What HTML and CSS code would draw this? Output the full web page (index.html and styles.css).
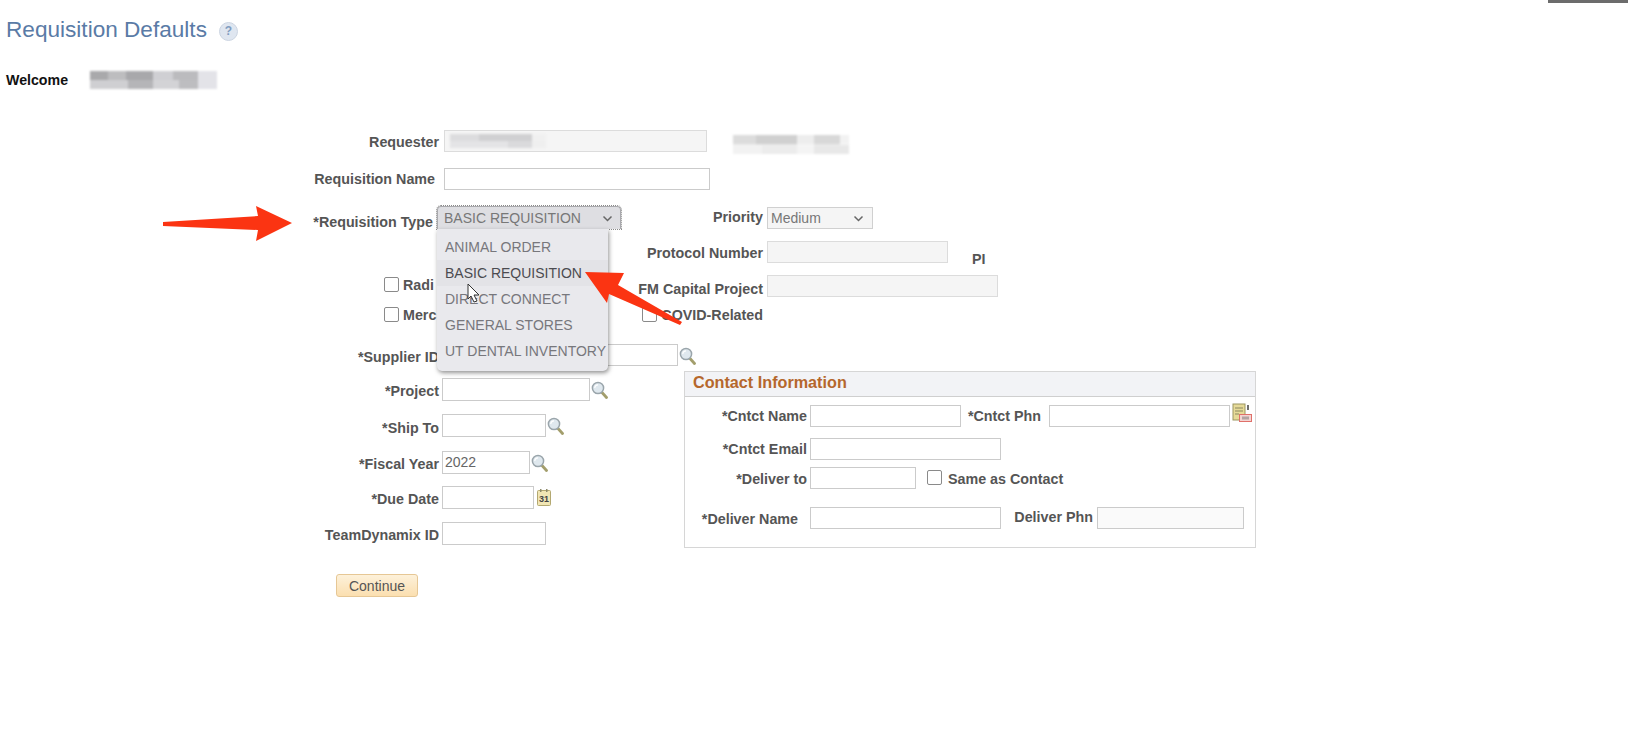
FILE: index.html
```html
<!DOCTYPE html>
<html lang="en">
<head>
  <meta charset="UTF-8" />
  <title>Requisition Defaults</title>
  <link rel="stylesheet" href="styles.css">
</head>
<body>
  <svg class="defs" width="0" height="0">
    <symbol id="lookup" viewBox="0 0 17 18">
      <line x1="11" y1="11.5" x2="15.5" y2="16.5" stroke="#a39e6c" stroke-width="2.8" stroke-linecap="round"/>
      <circle cx="7" cy="7" r="5.6" fill="#dfe8ee" stroke="#9aa5ab" stroke-width="1.5"/>
      <path d="M3.8 7a3.2 3.2 0 0 1 3.2-3.2" fill="none" stroke="#fff" stroke-width="1.2"/>
    </symbol>
  </svg>

  <div class="top-bar"></div>

  <div class="page-head">
    <h1 class="page-title">Requisition Defaults</h1>
    <span class="help-icon">?</span>
  </div>
  <div class="welcome-row">
    <span class="welcome">Welcome</span>
    <span class="blur blur-name"></span>
  </div>

  <div class="top-form">
    <div class="cell-a">
      <label class="lbl lbl-requester">Requester</label>
      <div class="txt txt-disabled txt-requester"><span class="blur blur-requester"></span></div>
      <span class="blur blur-side"></span>
    </div>
    <div class="cell-a">
      <label class="lbl lbl-reqname">Requisition Name</label>
      <input class="txt txt-reqname" type="text">
    </div>
    <div class="cell-a cell-type">
      <label class="lbl lbl-type">*Requisition Type</label>
      <div class="select select-type">
        <span>BASIC REQUISITION</span>
        <svg class="chev" width="11" height="7" viewBox="0 0 11 7"><path d="M1.5 1.5 5.5 5.5 9.5 1.5" fill="none" stroke="#666" stroke-width="1.5"/></svg>
      </div>
      <label class="lbl lbl-b">Priority</label>
      <div class="select select-priority">
        <span>Medium</span>
        <svg class="chev" width="11" height="7" viewBox="0 0 11 7"><path d="M1.5 1.5 5.5 5.5 9.5 1.5" fill="none" stroke="#666" stroke-width="1.5"/></svg>
      </div>
    </div>
    <div class="cell-a cell-proto">
      <label class="lbl lbl-b">Protocol Number</label>
      <div class="txt txt-disabled txt-proto"></div>
      <span class="lbl lbl-pi">PI</span>
    </div>
    <div class="cell-a">
      <div class="check-col">
        <input class="chk" type="checkbox">
        <label class="lbl">Radi</label>
      </div>
      <label class="lbl lbl-b lbl-fm">FM Capital Project</label>
      <div class="txt txt-disabled txt-fm"></div>
    </div>
    <div class="cell-a">
      <div class="check-col">
        <input class="chk" type="checkbox">
        <label class="lbl">Merc</label>
      </div>
      <div class="lbl-b covid">
        <input class="chk" type="checkbox">
        <label class="lbl">COVID-Related</label>
      </div>
    </div>
  </div>

  <div class="lower-form">
    <div class="supplier-row">
      <label class="lbl lbl-left">*Supplier ID</label>
      <input class="txt txt-supplier" type="text">
      <svg class="icon"><use href="#lookup"/></svg>
    </div>

    <div class="left-col">
      <div class="cell-a">
        <label class="lbl lbl-left">*Project</label>
        <input class="txt txt-project" type="text">
        <svg class="icon"><use href="#lookup"/></svg>
      </div>
      <div class="cell-a">
        <label class="lbl lbl-left lbl-ship">*Ship To</label>
        <input class="txt txt-short" type="text">
        <svg class="icon"><use href="#lookup"/></svg>
      </div>
      <div class="cell-a">
        <label class="lbl lbl-left">*Fiscal Year</label>
        <input class="txt txt-year" type="text" value="2022">
        <svg class="icon"><use href="#lookup"/></svg>
      </div>
      <div class="cell-a">
        <label class="lbl lbl-left">*Due Date</label>
        <input class="txt txt-date" type="text">
        <svg class="icon-cal" width="16" height="18" viewBox="0 0 16 18">
          <rect x="1.5" y="2.5" width="13" height="15" rx="1" fill="#f1e6b4" stroke="#b3a871"/>
          <rect x="4" y="1" width="1.5" height="3" fill="#8d8a6a"/>
          <rect x="10" y="1" width="1.5" height="3" fill="#8d8a6a"/>
          <text x="8" y="13.5" class="cal-num">31</text>
        </svg>
      </div>
      <div class="cell-a">
        <label class="lbl lbl-left">TeamDynamix ID</label>
        <input class="txt txt-short" type="text">
      </div>
      <button class="btn-continue">Continue</button>
    </div>

    <div class="contact-box">
      <div class="contact-head">Contact Information</div>
      <div class="contact-body">
        <div class="cell-a">
          <label class="lbl lbl-c">*Cntct Name</label>
          <input class="txt txt-cname" type="text">
          <label class="lbl lbl-phn">*Cntct Phn</label>
          <input class="txt txt-cphn" type="text">
          <svg class="icon-doc" width="21" height="20" viewBox="0 0 21 20">
            <rect x="1" y="1" width="12" height="16" fill="#e6da98" stroke="#9c9660"/>
            <path d="M3 5h8M3 8h8M3 11h4" stroke="#8b8860"/>
            <path d="M16 2v5" stroke="#333" stroke-width="1.4"/>
            <rect x="7.5" y="11.5" width="12" height="7" fill="#f3d4d2" stroke="#e0706a"/>
            <path d="M10 15h7" stroke="#b3a3a2" stroke-width="3"/>
          </svg>
        </div>
        <div class="cell-a">
          <label class="lbl lbl-c">*Cntct Email</label>
          <input class="txt txt-wide" type="text">
        </div>
        <div class="cell-a">
          <label class="lbl lbl-c">*Deliver to</label>
          <input class="txt txt-deliver" type="text">
          <input class="chk chk-same" type="checkbox">
          <label class="lbl">Same as Contact</label>
        </div>
        <div class="cell-a">
          <label class="lbl lbl-c lbl-dname">*Deliver Name</label>
          <input class="txt txt-wide" type="text">
          <label class="lbl lbl-dphn">Deliver Phn</label>
          <input class="txt txt-dphn" type="text">
        </div>
      </div>
    </div>
  </div>

  <!-- open dropdown -->
  <ul class="menu">
    <li>ANIMAL ORDER</li>
    <li class="hover">BASIC REQUISITION</li>
    <li>DIRECT CONNECT</li>
    <li>GENERAL STORES</li>
    <li>UT DENTAL INVENTORY</li>
  </ul>

  <!-- annotation arrows and mouse pointer on top of the page -->
  <svg class="overlay" width="1628" height="741" viewBox="0 0 1628 741">
    <polygon points="163,222 258,216 256,206 292,223 256,241 258,230 163,226" fill="#fb3412"/>
    <polygon points="585,272 624,273 618,285 682,322 680,325 609,294 607,303" fill="#fb3412"/>
    <polygon points="468,284 468,299 471,296 474,302 477,301 474,295 479,295" fill="#fff" stroke="#333" stroke-width="1"/>
  </svg>
</body>
</html>
```

FILE: styles.css
```css
* {
  box-sizing: border-box;
}

body {
  margin: 0;
  height: 741px;
  overflow: hidden;
  position: relative;
  background: #fff;
  font-family: "Liberation Sans", Arial, sans-serif;
  font-size: 14px;
  color: #555;
}

.defs {
  position: absolute;
}

.top-bar {
  position: absolute;
  top: 0;
  right: 0;
  width: 80px;
  height: 3px;
  background: #6c6c6c;
}

.page-head {
  display: flex;
  align-items: center;
  height: 40px;
  padding: 19px 0 0 6px;
}

.page-title {
  margin: 0;
  font-size: 22.6px;
  font-weight: normal;
  color: #5a7ba6;
}

.help-icon {
  width: 19px;
  height: 19px;
  margin: 4px 0 0 12px;
  border-radius: 50%;
  background: #dfe6f0;
  border: 1px solid #ccd5e2;
  color: #7f9cc0;
  font-size: 12px;
  font-weight: bold;
  line-height: 17px;
  text-align: center;
}

.welcome-row {
  display: flex;
  align-items: flex-start;
  height: 90px;
  padding: 32px 0 0 6px;
}

.welcome {
  width: 84px;
  font-size: 14.2px;
  font-weight: bold;
  color: #111;
}

/* pixelated redaction blocks */
.blur {
  display: block;
  background-repeat: no-repeat;
  background-size: 100% 50%;
  background-position: top, bottom;
  filter: blur(1px);
}

.blur-name {
  width: 127px;
  height: 18px;
  margin-top: -1px;
  background-image:
    linear-gradient(90deg, #a9a9ab 0 14%, #bdbdbf 14% 28%, #a8a8ab 28% 50%, #cfcfd3 50% 65%, #bbbbbe 65% 85%, #e3e3e8 85%),
    linear-gradient(90deg, #cfcfd2 0 30%, #b5b5b8 30% 50%, #d3d3d6 50% 70%, #bdbdc0 70% 85%, #e3e3e8 85%);
}

.blur-requester {
  width: 96px;
  height: 14px;
  margin: 3px 0 0 3px;
  background-image:
    linear-gradient(90deg, #dcdcde 0 30%, #d0d0d2 30% 85%, #f0f0f0 85%),
    linear-gradient(90deg, #e4e4e6 0 60%, #dadadc 60% 85%, #efefef 85%);
}

.blur-side {
  width: 116px;
  height: 19px;
  margin: 5px 0 0 26px;
  background-image:
    linear-gradient(90deg, #dcdcdc 0 20%, #d0d0d0 20% 55%, #ededed 55% 70%, #d8d8d8 70% 92%, #f2f2f2 92%),
    linear-gradient(90deg, #f2f2f2 0 25%, #ececec 25% 55%, #f4f4f4 55% 70%, #e8e8e8 70%);
}

.lbl {
  font-weight: bold;
  font-size: 14.3px;
  color: #555;
  white-space: nowrap;
}

.txt {
  display: block;
  height: 22px;
  padding: 0 2px;
  border: 1px solid #cbcbcb;
  border-radius: 0;
  background: #fff;
  font: 14px "Liberation Sans", Arial, sans-serif;
  color: #666;
  outline: none;
}

.txt-disabled {
  background: #f5f5f5;
  border-color: #dcdcdc;
}

/* upper block of the form */
.top-form {
  display: grid;
  grid-template-rows: 38px 38px 35px 34px 30px 39px;
}

.cell-a {
  display: flex;
  align-items: flex-start;
}

.lbl-requester {
  width: 439px;
  padding-top: 4px;
  text-align: right;
  margin-right: 5px;
}

.txt-requester {
  width: 263px;
}

.lbl-reqname {
  width: 435px;
  padding-top: 3px;
  text-align: right;
  margin-right: 9px;
}

.txt-reqname {
  width: 266px;
}

.lbl-type {
  width: 433px;
  padding-top: 8px;
  text-align: right;
  margin-right: 4px;
}

.select {
  display: flex;
  align-items: center;
  justify-content: space-between;
  height: 22px;
  font-size: 14px;
  color: #777;
}

.select-type {
  width: 184px;
  height: 23px;
  padding: 0 7px 0 6px;
  background: #dedee2;
  border: 1px solid #a9a9ad;
  border-bottom: none;
  border-radius: 4px 4px 0 0;
  outline: 1px dotted #8a8a8a;
  outline-offset: 0;
}

.select-priority {
  width: 106px;
  margin-top: 1px;
  padding: 0 8px 0 3px;
  background: #f5f5f5;
  border: 1px solid #d0d0d0;
}

.lbl-b {
  width: 142px;
  margin-right: 4px;
  text-align: right;
}

.cell-type .lbl-b {
  padding-top: 3px;
}

.cell-proto .lbl-b {
  margin-left: 621px;
  padding-top: 4px;
}

.txt-proto {
  width: 181px;
}

.lbl-pi {
  margin: 10px 0 0 24px;
}

.check-col {
  display: flex;
  align-items: flex-start;
  width: 621px;
  padding-left: 384px;
}

.check-col .lbl {
  padding-top: 2px;
}

.chk {
  appearance: none;
  width: 15px;
  height: 15px;
  margin: 2px 4px 0 0;
  flex: none;
  background: #fff;
  border: 1.5px solid #8a8a8a;
  border-radius: 2px;
}

.lbl-fm {
  padding-top: 6px;
}

.txt-fm {
  width: 231px;
}

.covid {
  display: flex;
  justify-content: flex-end;
  align-items: flex-start;
}

.covid .lbl {
  padding-top: 2px;
}

/* lower block: supplier, left column and contact box */
.lower-form {
  display: grid;
  grid-template-columns: 684px 572px;
  grid-template-rows: 27px auto;
}

.supplier-row {
  grid-column: 1 / 3;
  display: flex;
  align-items: flex-start;
}

.lbl-left {
  width: 439px;
  margin-right: 3px;
  padding-top: 5px;
  text-align: right;
}

.lbl-ship {
  padding-top: 6px;
}

.txt-supplier {
  width: 236px;
}

.icon {
  width: 17px;
  height: 18px;
  margin: 3px 0 0 1px;
  flex: none;
}

.left-col {
  display: grid;
  grid-template-rows: 36px 37px 35px 36px 52px auto;
  padding-top: 7px;
}

.left-col .txt {
  height: 23px;
}

.txt-project {
  width: 148px;
}

.txt-short {
  width: 104px;
}

.txt-year {
  width: 88px;
  padding-bottom: 2px;
}

.txt-date {
  width: 92px;
}

.icon-cal {
  margin: 2px 0 0 2px;
}

.cal-num {
  font-size: 9px;
  font-weight: bold;
  fill: #444;
  text-anchor: middle;
}

.btn-continue {
  width: 82px;
  height: 23px;
  margin-left: 336px;
  padding: 0;
  background: linear-gradient(#fdf1da, #fbdfb0);
  border: 1px solid #e6c795;
  border-radius: 3px;
  font: 14px "Liberation Sans", Arial, sans-serif;
  color: #555;
}

.contact-box {
  height: 177px;
  border: 1px solid #d6d6d6;
}

.contact-head {
  height: 25px;
  padding: 1px 0 0 8px;
  background: #f2f3f6;
  border-bottom: 1px solid #cfcfcf;
  font-size: 16.2px;
  font-weight: bold;
  color: #b5672c;
}

.contact-body {
  display: grid;
  grid-template-rows: 33px 29px 40px auto;
  padding-top: 8px;
}

.lbl-c {
  width: 122px;
  margin-right: 3px;
  padding-top: 3px;
  text-align: right;
}

.txt-cname {
  width: 151px;
}

.lbl-phn {
  width: 80px;
  margin-right: 8px;
  padding-top: 3px;
  text-align: right;
}

.txt-cphn {
  width: 181px;
}

.icon-doc {
  margin: -2px 0 0 2px;
}

.txt-wide {
  width: 191px;
}

.txt-deliver {
  width: 106px;
}

.cell-a:nth-child(3) > .lbl-c {
  padding-top: 4px;
}

.chk-same {
  margin: 3px 5px 0 11px;
}

.chk-same + .lbl {
  padding-top: 4px;
  margin-left: 1px;
}

.lbl-dname {
  width: 113px;
  margin-right: 12px;
  padding-top: 4px;
}

.lbl-dphn {
  width: 92px;
  margin-right: 4px;
  padding-top: 2px;
  text-align: right;
}

.txt-dphn {
  width: 147px;
  background: #fafafa;
}

/* things over the form */
.menu {
  position: absolute;
  top: 229px;
  left: 437px;
  width: 171px;
  height: 142px;
  margin: 0;
  padding: 5px 0 0;
  list-style: none;
  background: #e9e9ed;
  border-radius: 0 0 5px 5px;
  box-shadow: 1px 2px 4px rgba(60, 60, 60, 0.55);
  font-size: 14px;
  color: #77777c;
}

.menu li {
  height: 26px;
  padding: 0 0 0 8px;
  line-height: 26px;
  white-space: nowrap;
}

.menu .hover {
  background: #e3e3e7;
  color: #4b4b50;
}

.overlay {
  position: absolute;
  top: 0;
  left: 0;
  pointer-events: none;
}
```
